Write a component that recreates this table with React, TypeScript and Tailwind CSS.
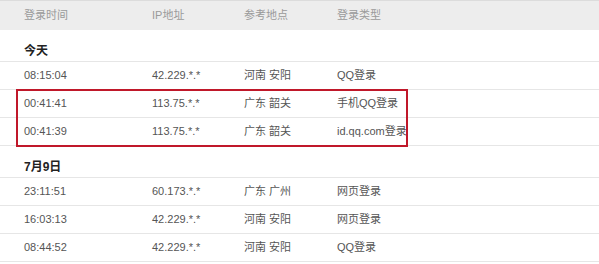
import React from 'react';

type Row = { time: string; ip: string; place: string; type: string };

const cols = 'grid grid-cols-[128px_92px_93px_1fr] pl-[24px]';

const today: Row[] = [
  { time: '08:15:04', ip: '42.229.*.*', place: '河南 安阳', type: 'QQ登录' },
  { time: '00:41:41', ip: '113.75.*.*', place: '广东 韶关', type: '手机QQ登录' },
  { time: '00:41:39', ip: '113.75.*.*', place: '广东 韶关', type: 'id.qq.com登录' },
];

const july9: Row[] = [
  { time: '23:11:51', ip: '60.173.*.*', place: '广东 广州', type: '网页登录' },
  { time: '16:03:13', ip: '42.229.*.*', place: '河南 安阳', type: '网页登录' },
  { time: '08:44:52', ip: '42.229.*.*', place: '河南 安阳', type: 'QQ登录' },
];

const LogRow: React.FC<{ row: Row }> = ({ row }) => (
  <div className={`${cols} h-[28px] items-center border-b border-[#e6e6e6] text-[11px] text-[#555]`}>
    <span>{row.time}</span>
    <span>{row.ip}</span>
    <span>{row.place}</span>
    <span>{row.type}</span>
  </div>
);

const Section: React.FC<{ title: string }> = ({ title }) => (
  <div className="flex h-[32px] items-end border-b border-[#e6e6e6] pb-[1px] pl-[24px] text-[12px] leading-[18px] font-bold text-[#222]">
    {title}
  </div>
);

export default function App() {
  return (
    <div
      className="h-[264px] w-[599px] overflow-hidden bg-white"
      style={{ fontFamily: '"Liberation Sans", "Noto Sans CJK SC", sans-serif' }}
    >
      {/* Header */}
      <div className={`${cols} h-[30px] items-center border-t border-[#dcdcdc] bg-[#ededed] text-[11px] text-[#9a9a9a]`}>
        <span>登录时间</span>
        <span>IP地址</span>
        <span>参考地点</span>
        <span>登录类型</span>
      </div>

      <Section title="今天" />
      <LogRow row={today[0]} />
      <div className="relative">
        <LogRow row={today[1]} />
        <LogRow row={today[2]} />
        <div className="pointer-events-none absolute -top-px left-[16px] h-[58px] w-[392px] border-2 border-[#c0182a]" />
      </div>

      <Section title="7月9日" />
      {july9.map((r) => (
        <LogRow key={r.time} row={r} />
      ))}
    </div>
  );
}
